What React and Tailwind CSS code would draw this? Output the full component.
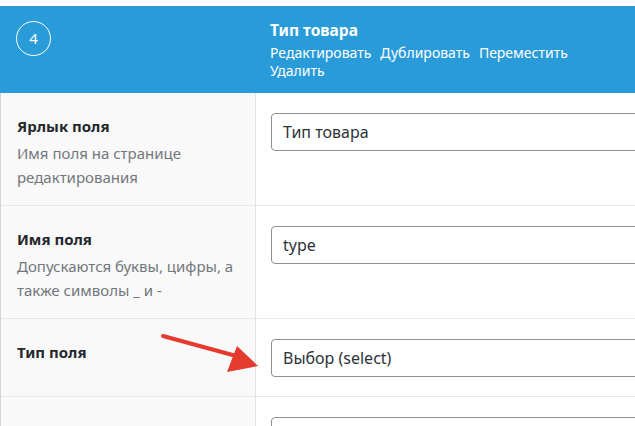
import React from 'react'

const font = { fontFamily: '"Noto Sans", "Open Sans", sans-serif' }

const rows = [
  { label: 'Ярлык поля', desc: ['Имя поля на странице', 'редактирования'], value: 'Тип товара' },
  { label: 'Имя поля', desc: ['Допускаются буквы, цифры, а', 'также символы _ и -'], value: 'type' },
  { label: 'Тип поля', desc: [], value: 'Выбор (select)' },
  { label: 'Инструкции', desc: [], value: '' },
]

const FieldRow = ({ row }) => (
  <div className="flex border-b border-[#e8e8e8]">
    <div className="w-[255px] shrink-0 bg-[#f9f9f9] border-r border-[#e1e1e1] pl-4 pr-3 pt-[23px] pb-4">
      <div className="text-[15px] leading-5 font-bold text-[#23282d]">{row.label}</div>
      {row.desc.length > 0 && (
        <div className="mt-[5px] text-[15px] leading-6 text-[#72777c]">
          {row.desc.map((d) => (
            <div key={d}>{d}</div>
          ))}
        </div>
      )}
    </div>
    <div className="flex-1 pl-[15px] pt-5 pb-[19px]">
      <div className="h-[38px] w-[400px] rounded-[4px] border border-[#8c8f94] bg-white pl-[11px] flex items-center text-[16px] text-[#2c3338]">
        {row.value}
      </div>
    </div>
  </div>
)

export default function App() {
  return (
    <div className="w-[635px] h-[426px] overflow-hidden bg-white pt-[6px] relative" style={font}>
      <div className="flex h-[87px] bg-[#2a9bd9] text-white">
        <div className="w-[256px] shrink-0 pl-4 pt-[15px]">
          <div className="w-[35px] h-[35px] rounded-full border-[1.5px] border-white flex items-center justify-center text-[15px]">
            4
          </div>
        </div>
        <div className="flex-1 pl-[14px] pr-[14px] pt-[14px]">
          <div className="text-[15.5px] leading-5 font-bold">Тип товара</div>
          <div className="mt-1 flex flex-wrap gap-x-[9px] text-[14px] leading-[18px]">
            <span>Редактировать</span>
            <span>Дублировать</span>
            <span>Переместить</span>
            <span>Удалить</span>
          </div>
        </div>
      </div>
      <div className="border-l border-[#d5d5d5]">
        {rows.map((r) => (
          <FieldRow key={r.label} row={r} />
        ))}
      </div>
      <svg className="absolute left-0 top-0 pointer-events-none" width="635" height="426">
        <line x1="163" y1="336" x2="240" y2="357" stroke="#e53b2f" strokeWidth="4" strokeLinecap="round" />
        <polygon points="237,346 258,366 227,372" fill="#e53b2f" />
      </svg>
    </div>
  )
}
